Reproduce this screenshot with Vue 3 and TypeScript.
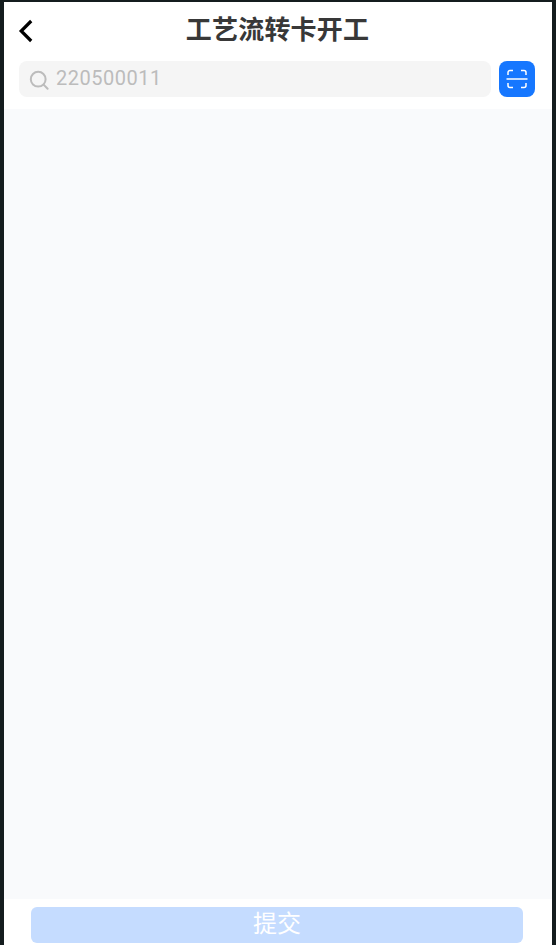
<script setup lang="ts">
const title: string = '工艺流转卡开工'
const keyword: string = '220500011'
</script>

<template>
  <div class="frame">
    <div class="screen">
      <header class="nav">
        <svg class="back" viewBox="0 0 16 24" width="16" height="24" aria-hidden="true">
          <path d="M13.2 2 3.200 12 13.200 22" fill="none" stroke="#000" stroke-width="3.200" />
        </svg>
        <h1 class="title">{{ title }}</h1>
      </header>
      <div class="search-row">
        <div class="search">
          <svg class="glass" viewBox="0 0 20 20" width="20" height="20" aria-hidden="true">
            <circle cx="9.2" cy="9.2" r="7.4" fill="none" stroke="#bcbcbc" stroke-width="2" />
            <path d="M14.6 14.6 18.6 18.8" fill="none" stroke="#bcbcbc" stroke-width="2" stroke-linecap="round" />
          </svg>
          <span class="placeholder">{{ keyword }}</span>
        </div>
        <button class="scan" type="button" aria-label="scan">
          <svg viewBox="0 0 22 20" width="22" height="20" aria-hidden="true">
            <path
              d="M2 6V3.500A2 2 0 0 1 4 1.500H7M15 1.500H18A2 2 0 0 1 20 3.500V6M2 14V16.500A2 2 0 0 0 4 18.500H7M15 18.500H18A2 2 0 0 0 20 16.500V14"
              fill="none" stroke="#fff" stroke-width="1.500" />
            <path d="M0.500 10H21.500" stroke="#fff" stroke-width="1.500" />
          </svg>
        </button>
      </div>
      <main class="content"></main>
      <footer class="footer">
        <button class="submit" type="button">提交</button>
      </footer>
    </div>
  </div>
</template>

<style>
html, body { margin: 0; background: #141c1e; }
</style>

<style scoped>
.frame {
  box-sizing: border-box;
  width: 556px;
  height: 945px;
  padding: 2px 4px 0;
  background: #141c1e;
  overflow: hidden;
}
.screen {
  display: flex;
  flex-direction: column;
  height: 943px;
  background: #fff;
  font-family: "Noto Sans CJK SC", Roboto, sans-serif;
}
.nav {
  position: relative;
  display: flex;
  justify-content: center;
  align-items: center;
  height: 56px;
  flex: none;
}
.back {
  position: absolute;
  left: 14px;
  top: 17px;
}
.title {
  margin: 0 1px 4px 0;
  font-size: 26px;
  letter-spacing: 0.2px;
  line-height: 52px;
  font-weight: 700;
  color: #383838;
}
.search-row {
  display: flex;
  gap: 8px;
  height: 36px;
  padding: 3px 17px 0 15px;
  flex: none;
}
.search {
  flex: 1;
  display: flex;
  align-items: center;
  gap: 7px;
  padding-left: 10px;
  background: #f5f5f5;
  border-radius: 8px;
}
.glass { flex: none; margin-top: 1px; }
.placeholder {
  margin-top: -2px;
  font-family: Roboto, "Noto Sans CJK SC", sans-serif;
  font-size: 20px;
  letter-spacing: 0.5px;
  color: #bcbcbc;
}
.scan {
  flex: none;
  display: flex;
  align-items: center;
  justify-content: center;
  width: 36px;
  height: 36px;
  padding: 0;
  border: 0;
  border-radius: 8px;
  background: #1677ff;
}
.content {
  flex: 1;
  margin-top: 12px;
  background: #f9fafc;
}
.footer {
  flex: none;
  height: 46px;
  box-sizing: border-box;
  padding: 8px 29px 0 27px;
}
.submit {
  display: block;
  width: 100%;
  height: 36px;
  padding: 0 0 6px;
  border: 0;
  border-radius: 6px;
  background: #c5dcff;
  color: #fff;
  font-family: "Noto Sans CJK SC", sans-serif;
  font-size: 24px;
  line-height: 30px;
}
</style>
